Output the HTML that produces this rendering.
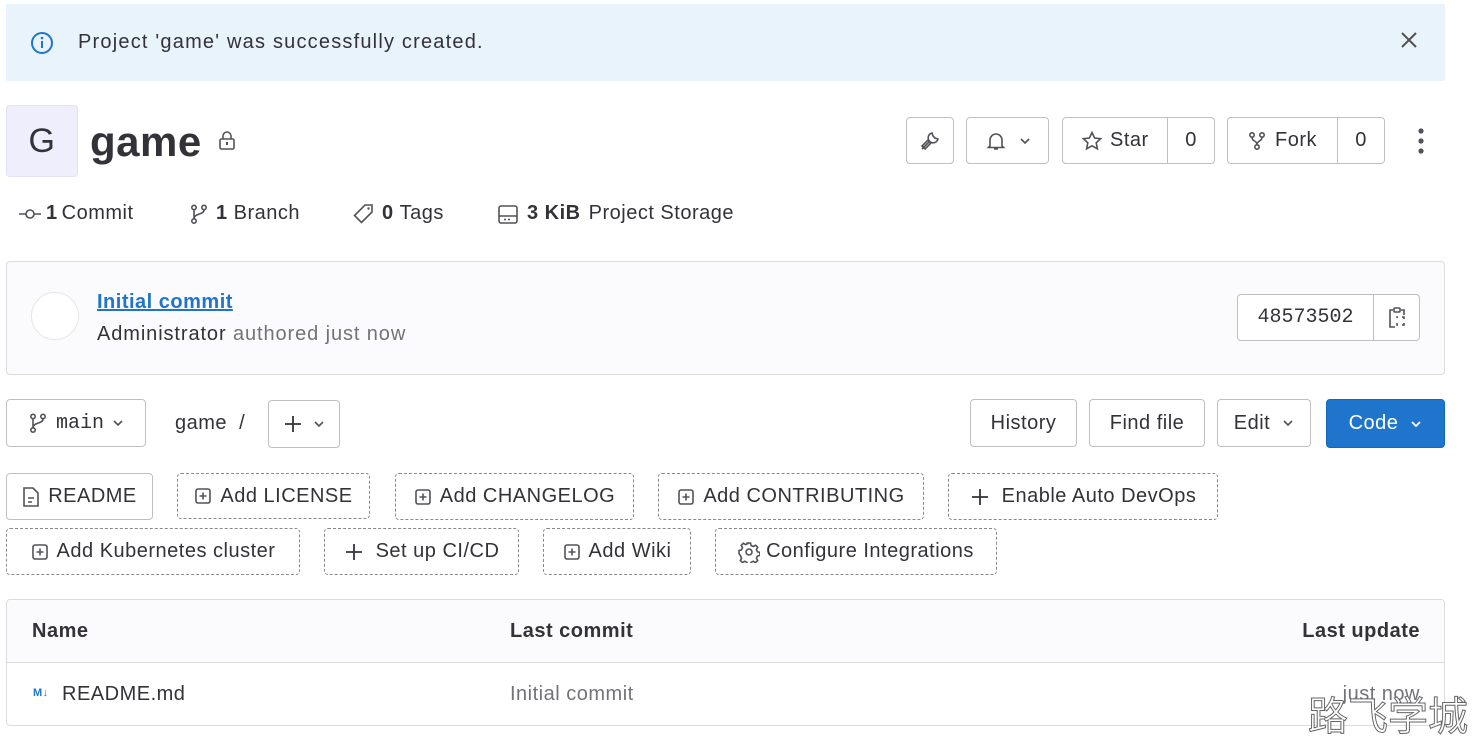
<!DOCTYPE html>
<html><head><meta charset="utf-8"><style>
*{box-sizing:border-box;margin:0;padding:0}
body{width:1483px;height:746px;background:#fff;font-family:"Liberation Sans",sans-serif;color:#333238;position:relative;overflow:hidden;font-size:20px;letter-spacing:0.5px}
.a{position:absolute}
.btn{position:absolute;border:1px solid #bfbfc3;border-radius:4px;background:#fff;display:flex;align-items:center;justify-content:center;color:#333238;font-size:20px;white-space:nowrap}
.dash{border:1px dashed #89888d}
svg{display:block}
.ic{stroke:#535158;fill:none;stroke-width:1.6}
</style></head><body>
<div class="a" style="left:6px;top:4px;width:1439px;height:77px;background:#e9f3fc"></div>
<svg class="a" style="left:30px;top:31px" width="24" height="24" viewBox="0 0 24 24"><circle cx="12" cy="12" r="10" stroke="#1f75cb" stroke-width="2" fill="none"/><rect x="11" y="10" width="2" height="7" fill="#1f75cb"/><circle cx="12" cy="7" r="1.3" fill="#1f75cb"/></svg>
<div class="a" style="left:78px;top:31px;color:#333238;letter-spacing:1.2px">Project 'game' was successfully created.</div>
<svg class="a" style="left:1399px;top:30px" width="20" height="20" viewBox="0 0 20 20"><path d="M3 3L17 17M17 3L3 17" stroke="#535158" stroke-width="2"/></svg>

<div class="a" style="left:6px;top:105px;width:72px;height:72px;background:#eeeefc;border:1px solid #e2e2f5;border-radius:4px;font-size:34px;color:#333238;display:flex;align-items:center;justify-content:center">G</div>
<div class="a" style="left:90px;top:118px;font-size:42px;font-weight:bold;letter-spacing:0.5px">game</div>
<svg class="a" style="left:217px;top:131px" width="20" height="20" viewBox="0 0 20 20"><rect x="3" y="8" width="14" height="10" rx="1.5" class="ic"/><path d="M6 8V5a4 4 0 018 0v3" class="ic"/><rect x="9" y="11" width="2" height="3" fill="#535158"/></svg>

<div class="btn" style="left:906px;top:117px;width:48px;height:47px"><svg width="22" height="22" viewBox="0 0 22 22"><path d="M4 18l7-7M13 3a5 5 0 106 6l-3-1-2-2-1-3zM4 18l-1 1" class="ic"/><path d="M3 16l3 3 6-6-3-3z" class="ic"/></svg></div>
<div class="btn" style="left:966px;top:117px;width:83px;height:47px;gap:12px"><svg width="22" height="22" viewBox="0 0 22 22"><path d="M5 16V10a6 6 0 0112 0v6l1.5 1.5h-15zM9 19h4" class="ic"/></svg><svg width="12" height="8" viewBox="0 0 12 8"><path d="M2 2l4 4 4-4" class="ic"/></svg></div>
<div class="btn" style="left:1062px;top:117px;width:153px;height:47px;justify-content:flex-start"><div style="display:flex;align-items:center;gap:7px;padding-left:18px;width:105px;border-right:1px solid #bfbfc3;height:100%"><svg width="22" height="22" viewBox="0 0 22 22"><path d="M11 2.5l2.6 5.5 6 .7-4.4 4.1 1.2 6-5.4-3-5.4 3 1.2-6L2.4 8.7l6-.7z" class="ic"/></svg>Star</div><div style="flex:1;text-align:center">0</div></div>
<div class="btn" style="left:1227px;top:117px;width:158px;height:47px;justify-content:flex-start"><div style="display:flex;align-items:center;gap:7px;padding-left:18px;width:110px;border-right:1px solid #bfbfc3;height:100%"><svg width="22" height="22" viewBox="0 0 22 22"><circle cx="6" cy="5" r="2.2" class="ic"/><circle cx="16" cy="5" r="2.2" class="ic"/><circle cx="11" cy="17" r="2.2" class="ic"/><path d="M6 7.5c0 4 5 3 5 7M16 7.5c0 4-5 3-5 7" class="ic"/></svg>Fork</div><div style="flex:1;text-align:center">0</div></div>
<svg class="a" style="left:1416px;top:128px" width="10" height="26" viewBox="0 0 10 26"><circle cx="5" cy="3" r="2.6" fill="#535158"/><circle cx="5" cy="13" r="2.6" fill="#535158"/><circle cx="5" cy="23" r="2.6" fill="#535158"/></svg>

<div class="a" style="left:18px;top:202px;display:flex;align-items:center;gap:4px"><svg width="24" height="20" viewBox="0 0 24 20"><circle cx="12" cy="10" r="4" class="ic"/><path d="M1 10h7M16 10h7" class="ic"/></svg><b>1</b>Commit</div>
<div class="a" style="left:188px;top:202px;display:flex;align-items:center;gap:6px"><svg width="22" height="22" viewBox="0 0 22 22"><circle cx="6" cy="4.5" r="2.2" class="ic"/><circle cx="16" cy="4.5" r="2.2" class="ic"/><circle cx="6" cy="18" r="2.2" class="ic"/><path d="M6 7v9M16 7c0 5-10 3-10 9" class="ic"/></svg><b>1</b>Branch</div>
<div class="a" style="left:352px;top:202px;display:flex;align-items:center;gap:6px"><svg width="24" height="22" viewBox="0 0 24 22"><path d="M13 2h7v7L9.5 19.5 2.5 12.5z" class="ic"/><circle cx="16.5" cy="5.5" r="1.2" fill="#535158"/></svg><b>0</b>Tags</div>
<div class="a" style="left:497px;top:202px;display:flex;align-items:center;gap:8px"><svg width="22" height="22" viewBox="0 0 22 22"><rect x="2" y="3" width="18" height="17" rx="2" class="ic"/><path d="M2 13h18" class="ic"/><circle cx="8" cy="16.5" r="1" fill="#535158"/><circle cx="12" cy="16.5" r="1" fill="#535158"/></svg><b>3 KiB</b>Project Storage</div>

<div class="a" style="left:6px;top:261px;width:1439px;height:114px;background:#fbfafd;border:1px solid #dcdcde;border-radius:4px"></div>
<div class="a" style="left:31px;top:292px;width:48px;height:48px;border-radius:50%;border:1px solid #e6e6e8;background:#fff"></div>
<div class="a" style="left:97px;top:291px;color:#1f75cb;font-weight:bold;text-decoration:underline">Initial commit</div>
<div class="a" style="left:97px;top:323px;letter-spacing:0.9px">Administrator <span style="color:#737278">authored just now</span></div>
<div class="btn" style="left:1237px;top:294px;width:183px;height:47px;justify-content:flex-start"><div style="width:136px;border-right:1px solid #bfbfc3;height:100%;display:flex;align-items:center;justify-content:center;font-family:'Liberation Mono',monospace;font-size:20px;letter-spacing:0">48573502</div><div style="flex:1;display:flex;justify-content:center"><svg width="22" height="24" viewBox="0 0 22 24"><path d="M7 4H4v17h5M15 4h3v5" class="ic"/><rect x="8" y="2" width="6" height="4" rx="1" class="ic"/><path d="M11 12v-1h1M16 11h2v2M18 17v2h-2M12 19h-1v-2" class="ic"/></svg></div></div>

<div class="btn" style="left:6px;top:399px;width:140px;height:48px;gap:8px"><svg width="20" height="22" viewBox="0 0 20 22"><circle cx="5" cy="4.5" r="2.2" class="ic"/><circle cx="15" cy="4.5" r="2.2" class="ic"/><circle cx="5" cy="18" r="2.2" class="ic"/><path d="M5 7v9M15 7c0 5-10 3-10 9" class="ic"/></svg><span style="font-family:'Liberation Mono',monospace;letter-spacing:0">main</span><svg width="12" height="8" viewBox="0 0 12 8"><path d="M2 2l4 4 4-4" class="ic"/></svg></div>
<div class="a" style="left:175px;top:412px">game&nbsp;&nbsp;/</div>
<div class="btn" style="left:268px;top:400px;width:72px;height:48px;gap:10px"><svg width="20" height="20" viewBox="0 0 20 20"><path d="M10 2v16M2 10h16" stroke="#333238" stroke-width="1.8"/></svg><svg width="12" height="8" viewBox="0 0 12 8"><path d="M2 2l4 4 4-4" class="ic"/></svg></div>
<div class="btn" style="left:970px;top:399px;width:107px;height:48px">History</div>
<div class="btn" style="left:1089px;top:399px;width:116px;height:48px">Find file</div>
<div class="btn" style="left:1217px;top:399px;width:94px;height:48px;gap:12px">Edit<svg width="12" height="8" viewBox="0 0 12 8"><path d="M2 2l4 4 4-4" class="ic"/></svg></div>
<div class="btn" style="left:1326px;top:399px;width:119px;height:49px;background:#1f75cb;border-color:#1068bf;color:#fff;gap:12px">Code<svg width="12" height="8" viewBox="0 0 12 8"><path d="M2 2l4 4 4-4" stroke="#fff" stroke-width="1.8" fill="none"/></svg></div>

<div class="btn" style="left:6px;top:473px;width:147px;height:47px;gap:8px"><svg width="18" height="22" viewBox="0 0 18 22"><path d="M2 2h9l5 5v13H2z" class="ic"/><path d="M6 12h6M6 16h4" class="ic"/></svg>README</div>
<div class="btn dash" style="left:177px;top:473px;width:193px;height:46px;gap:8px"><svg width="18" height="18" viewBox="0 0 18 18"><rect x="2" y="2" width="14" height="14" rx="2" class="ic"/><path d="M9 5.5v7M5.5 9h7" class="ic"/></svg>Add LICENSE</div>
<div class="btn dash" style="left:395px;top:473px;width:239px;height:47px;gap:8px"><svg width="18" height="18" viewBox="0 0 18 18"><rect x="2" y="2" width="14" height="14" rx="2" class="ic"/><path d="M9 5.5v7M5.5 9h7" class="ic"/></svg>Add CHANGELOG</div>
<div class="btn dash" style="left:658px;top:473px;width:266px;height:47px;gap:8px"><svg width="18" height="18" viewBox="0 0 18 18"><rect x="2" y="2" width="14" height="14" rx="2" class="ic"/><path d="M9 5.5v7M5.5 9h7" class="ic"/></svg>Add CONTRIBUTING</div>
<div class="btn dash" style="left:948px;top:473px;width:270px;height:47px;gap:12px"><svg width="20" height="20" viewBox="0 0 20 20"><path d="M10 2v16M2 10h16" stroke="#333238" stroke-width="1.8"/></svg>Enable Auto DevOps</div>
<div class="btn dash" style="left:6px;top:528px;width:294px;height:47px;gap:8px"><svg width="18" height="18" viewBox="0 0 18 18"><rect x="2" y="2" width="14" height="14" rx="2" class="ic"/><path d="M9 5.5v7M5.5 9h7" class="ic"/></svg>Add Kubernetes cluster</div>
<div class="btn dash" style="left:324px;top:528px;width:195px;height:47px;gap:12px"><svg width="20" height="20" viewBox="0 0 20 20"><path d="M10 2v16M2 10h16" stroke="#333238" stroke-width="1.8"/></svg>Set up CI/CD</div>
<div class="btn dash" style="left:543px;top:528px;width:148px;height:47px;gap:8px"><svg width="18" height="18" viewBox="0 0 18 18"><rect x="2" y="2" width="14" height="14" rx="2" class="ic"/><path d="M9 5.5v7M5.5 9h7" class="ic"/></svg>Add Wiki</div>
<div class="btn dash" style="left:715px;top:528px;width:282px;height:47px;gap:6px"><svg width="22" height="22" viewBox="0 0 22 22"><circle cx="11" cy="11" r="3" class="ic"/><path d="M9.5 2h3l.6 2.5 2.2 1 2.3-1.3 2.1 2.1-1.3 2.3 1 2.2 2.5.6v3l-2.5.6-1 2.2 1.3 2.3-2.1 2.1-2.3-1.3-2.2 1-.6 2.5h-3l-.6-2.5-2.2-1-2.3 1.3-2.1-2.1 1.3-2.3-1-2.2L1 12.5v-3l2.5-.6 1-2.2-1.3-2.3 2.1-2.1 2.3 1.3 2.2-1z" class="ic"/></svg>Configure Integrations</div>

<div class="a" style="left:6px;top:599px;width:1439px;height:127px;border:1px solid #dcdcde;border-radius:4px;overflow:hidden">
<div style="height:63px;background:#fbfafd;border-bottom:1px solid #dcdcde;position:relative;font-weight:bold">
<div class="a" style="left:25px;top:20px">Name</div><div class="a" style="left:503px;top:20px">Last commit</div><div class="a" style="right:24px;top:20px">Last update</div></div>
<div class="a" style="left:26px;top:87px;color:#1f75cb;font-size:11px;font-weight:bold">M↓</div>
<div class="a" style="left:55px;top:83px">README.md</div>
<div class="a" style="left:503px;top:83px;color:#737278">Initial commit</div>
<div class="a" style="right:24px;top:83px;color:#737278">just now</div>
</div>
<div class="a" style="left:1308px;top:693px;font-family:'Noto Sans CJK SC',sans-serif;font-size:40px;color:#fff;-webkit-text-stroke:1px #666;line-height:1;letter-spacing:0">路飞学城</div>
</body></html>
